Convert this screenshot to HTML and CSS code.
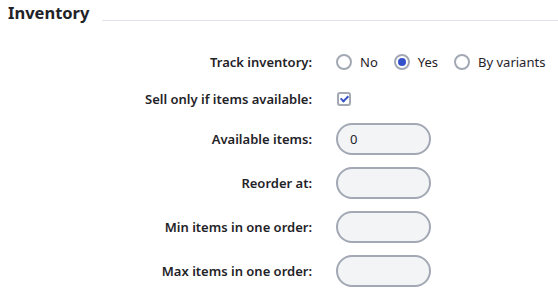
FILE: index.html
```html
<!DOCTYPE html>
<html>
<head>
<meta charset="utf-8">
<link rel="stylesheet" href="styles.css">
</head>
<body>
<section class="panel">
  <div class="header">
    <h2 class="title">Inventory</h2>
    <div class="rule"></div>
  </div>
  <div class="form">
    <label class="label row-radio">Track inventory:</label>
    <div class="field row-radio radios">
      <label class="opt"><input type="radio" name="track" class="radio"> No</label>
      <label class="opt"><input type="radio" name="track" class="radio" checked> Yes</label>
      <label class="opt"><input type="radio" name="track" class="radio"> By variants</label>
    </div>

    <label class="label row-check">Sell only if items available:</label>
    <div class="field row-check"><input type="checkbox" class="check" checked></div>

    <label class="label">Available items:</label>
    <div class="field"><input type="text" class="input" value="0"></div>

    <label class="label">Reorder at:</label>
    <div class="field"><input type="text" class="input"></div>

    <label class="label">Min items in one order:</label>
    <div class="field"><input type="text" class="input"></div>

    <label class="label">Max items in one order:</label>
    <div class="field"><input type="text" class="input"></div>
  </div>
</section>
</body>
</html>
```
FILE: styles.css
```css
* { box-sizing: border-box; }
body {
  margin: 0;
  background: #ffffff;
  font-family: "Noto Sans", "Open Sans", sans-serif;
  color: #1f2328;
}
.panel { padding: 0 0 0 8px; }
.header {
  display: flex;
  align-items: flex-end;
  height: 25px;
}
.title {
  margin: 0;
  font-size: 16.5px;
  font-weight: 700;
  line-height: 25px;
  color: #1f2328;
}
.rule {
  flex: 1;
  margin-left: 13px;
  margin-bottom: 4px;
  border-top: 1px solid #e1e4ea;
}
.form {
  display: grid;
  grid-template-columns: 304px 1fr;
  column-gap: 24px;
  row-gap: 12px;
  margin-top: 24px;
}
.label {
  display: flex;
  align-items: center;
  justify-content: flex-end;
  font-size: 13px;
  font-weight: 600;
  color: #1f2328;
  height: 32px;
  white-space: nowrap;
}
.field {
  display: flex;
  align-items: center;
  height: 32px;
}
.row-radio { height: 26px; }
.row-check { height: 24px; }
.radios { font-size: 13px; white-space: nowrap; }
.opt {
  display: flex;
  align-items: center;
  flex-shrink: 0;
  margin-right: 16px;
  color: #1f2328;
}
.opt:last-child { margin-right: 0; }
.radio {
  appearance: none;
  -webkit-appearance: none;
  flex-shrink: 0;
  width: 16px;
  height: 16px;
  margin: 0 8px 0 0;
  border: 2px solid #a2a8b4;
  border-radius: 50%;
  background: #fff;
  display: grid;
  place-items: center;
}
.radio:checked::before {
  content: "";
  width: 8px;
  height: 8px;
  border-radius: 50%;
  background: #3551c9;
}
.check {
  appearance: none;
  -webkit-appearance: none;
  width: 14px;
  height: 14px;
  margin: 0 0 0 1px;
  border: 2px solid #a2a8b4;
  border-radius: 3px;
  background: #fff;
  position: relative;
}
.check:checked::after {
  content: "";
  position: absolute;
  left: 3px;
  top: 0px;
  width: 3px;
  height: 6px;
  border: solid #3551c9;
  border-width: 0 2px 2px 0;
  transform: rotate(45deg);
}
.input {
  width: 95px;
  height: 32px;
  border: 2px solid #a2a8b4;
  border-radius: 16px;
  background: #f3f4f6;
  padding: 0 12px;
  font-family: inherit;
  font-size: 13px;
  color: #1f2328;
  outline: none;
}
```
